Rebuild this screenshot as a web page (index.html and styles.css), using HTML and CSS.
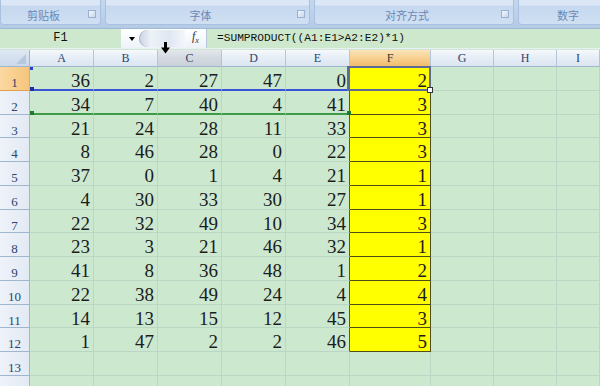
FILE: index.html
```html
<!DOCTYPE html>
<html>
<head>
<meta charset="utf-8">
<link rel="stylesheet" href="styles.css">
</head>
<body>
<div class="ribbon">
  <div class="group g1"><span class="glabel">剪贴板</span><span class="launch"></span></div>
  <div class="group g2"><span class="glabel">字体</span><span class="launch"></span></div>
  <div class="group g3"><span class="glabel">对齐方式</span><span class="launch"></span></div>
  <div class="group g4"><span class="glabel">数字</span></div>
</div>
<div class="fbar">
  <div class="namebox">F1</div>
  <div class="ctrl">
    <span class="drop"></span>
    <span class="grip"></span>
    <span class="fx"><i>f</i><sub>x</sub></span>
  </div>
  <div class="formula">=SUMPRODUCT((A1:E1&gt;A2:E2)*1)</div>
</div>
<svg class="cursor" width="9" height="12" viewBox="0 0 9 12"><rect x="3" y="0" width="3" height="6" fill="#000"/><path d="M0 5.5 H9 L4.5 11.5 Z" fill="#000"/></svg>
<div class="sheet">
  <div class="corner"></div><div class="ch">A</div><div class="ch">B</div><div class="ch hov">C</div><div class="ch">D</div><div class="ch">E</div><div class="ch sel">F</div><div class="ch">G</div><div class="ch">H</div><div class="ch">I</div>

  <div class="rh sel">1</div><div class="c r1 pin"><span class="mk b1"></span><span class="mk b2"></span>36</div><div class="c r1">2</div><div class="c r1">27</div><div class="c r1">47</div><div class="c r1 e">0</div><div class="c y act">2<span class="actbox"></span><span class="handle"></span></div><div class="c"></div><div class="c"></div><div class="c"></div>
  <div class="rh">2</div><div class="c r2 pin"><span class="mk g1m"></span>34</div><div class="c r2">7</div><div class="c r2">40</div><div class="c r2">4</div><div class="c r2 e pin">41<span class="mk g2m"></span></div><div class="c y">3</div><div class="c"></div><div class="c"></div><div class="c"></div>
  <div class="rh">3</div><div class="c">21</div><div class="c">24</div><div class="c">28</div><div class="c">11</div><div class="c e">33</div><div class="c y">3</div><div class="c"></div><div class="c"></div><div class="c"></div>
  <div class="rh">4</div><div class="c">8</div><div class="c">46</div><div class="c">28</div><div class="c">0</div><div class="c e">22</div><div class="c y">3</div><div class="c"></div><div class="c"></div><div class="c"></div>
  <div class="rh">5</div><div class="c">37</div><div class="c">0</div><div class="c">1</div><div class="c">4</div><div class="c e">21</div><div class="c y">1</div><div class="c"></div><div class="c"></div><div class="c"></div>
  <div class="rh">6</div><div class="c">4</div><div class="c">30</div><div class="c">33</div><div class="c">30</div><div class="c e">27</div><div class="c y">1</div><div class="c"></div><div class="c"></div><div class="c"></div>
  <div class="rh">7</div><div class="c">22</div><div class="c">32</div><div class="c">49</div><div class="c">10</div><div class="c e">34</div><div class="c y">3</div><div class="c"></div><div class="c"></div><div class="c"></div>
  <div class="rh">8</div><div class="c">23</div><div class="c">3</div><div class="c">21</div><div class="c">46</div><div class="c e">32</div><div class="c y">1</div><div class="c"></div><div class="c"></div><div class="c"></div>
  <div class="rh">9</div><div class="c">41</div><div class="c">8</div><div class="c">36</div><div class="c">48</div><div class="c e">1</div><div class="c y">2</div><div class="c"></div><div class="c"></div><div class="c"></div>
  <div class="rh">10</div><div class="c">22</div><div class="c">38</div><div class="c">49</div><div class="c">24</div><div class="c e">4</div><div class="c y">4</div><div class="c"></div><div class="c"></div><div class="c"></div>
  <div class="rh">11</div><div class="c">14</div><div class="c">13</div><div class="c">15</div><div class="c">12</div><div class="c e">45</div><div class="c y">3</div><div class="c"></div><div class="c"></div><div class="c"></div>
  <div class="rh">12</div><div class="c">1</div><div class="c">47</div><div class="c">2</div><div class="c">2</div><div class="c e">46</div><div class="c y">5</div><div class="c"></div><div class="c"></div><div class="c"></div>
  <div class="rh">13</div><div class="c"></div><div class="c"></div><div class="c"></div><div class="c"></div><div class="c"></div><div class="c"></div><div class="c"></div><div class="c"></div><div class="c"></div>
  <div class="rh"></div><div class="c"></div><div class="c"></div><div class="c"></div><div class="c"></div><div class="c"></div><div class="c"></div><div class="c"></div><div class="c"></div><div class="c"></div>
</div>
</body>
</html>
```
FILE: styles.css
```css
html, body {
  margin: 0;
  padding: 0;
}
body {
  width: 600px;
  height: 386px;
  overflow: hidden;
  position: relative;
  background: #cce8cf;
  font-family: "Liberation Serif", serif;
}

/* ribbon */
.ribbon {
  height: 28px;
  display: flex;
  gap: 4px;
  background: linear-gradient(#c4d7ee, #b4cbe6);
  overflow: hidden;
}
.group {
  flex: none;
  height: 25px;
  box-sizing: border-box;
  position: relative;
  display: flex;
  align-items: center;
  justify-content: center;
  padding: 5px 14px 0 0;
  border: 1px solid #a9c1df;
  border-top: none;
  border-radius: 0 0 4px 4px;
  background: linear-gradient(#dbe7f6 0, #dbe7f6 5px, #c6d8ef 6px, #d0e0f3 100%);
}
.g1 { width: 101px; }
.g2 { width: 205px; }
.g3 { width: 200px; }
.g4 { width: 114px; }
.glabel {
  font-family: "Noto Sans CJK SC", sans-serif;
  font-size: 11px;
  line-height: 14px;
  color: #6a88b6;
}
.launch {
  position: absolute;
  right: 4px;
  top: 10px;
  width: 6px;
  height: 6px;
  border: 1px solid #9ab1d2;
  background: linear-gradient(135deg, #f3f7fc, #c7d7ec);
}

/* formula bar */
.fbar {
  height: 19px;
  display: flex;
  background: #cde8cd;
  border-top: 1px solid #9fb8d4;
  border-bottom: 1px solid #e9eff6;
}
.namebox {
  width: 121px;
  flex: none;
  text-align: center;
  font-family: "Liberation Mono", monospace;
  font-size: 12px;
  line-height: 19px;
  color: #111;
}
.ctrl {
  width: 86px;
  flex: none;
  display: flex;
  align-items: center;
  background: linear-gradient(#ffffff, #eef3f9);
  border-right: 1px solid #b5c6da;
  box-sizing: border-box;
}
.drop {
  width: 0;
  height: 0;
  margin-left: 8px;
  border-left: 3px solid transparent;
  border-right: 3px solid transparent;
  border-top: 4px solid #000;
}
.grip {
  width: 46px;
  height: 17px;
  margin-left: 4px;
  border-radius: 9px 0 0 9px;
  background: linear-gradient(90deg, #c9d4e2 0, #eef2f8 12px, #dfe7f2 30px, #f4f7fb 100%);
  box-shadow: inset 1px 0 0 #aab8cb;
}
.fx {
  font-family: "Liberation Serif", serif;
  font-size: 12px;
  color: #333;
  margin-left: 7px;
  line-height: 12px;
}
.fx sub { font-size: 8px; font-style: italic; }
.formula {
  padding-left: 10px;
  font-family: "Liberation Mono", monospace;
  font-size: 11.2px;
  line-height: 19px;
  color: #111;
}

.cursor {
  position: absolute;
  left: 161px;
  top: 42px;
  z-index: 5;
}

/* sheet */
.sheet {
  margin-top: 1px;
  display: grid;
  grid-template-columns: 30px 64px 64px 64px 64px 64px 81px 63px 63px 1fr;
  grid-template-rows: 17px repeat(14, 23.75px);
}
.corner {
  background: linear-gradient(#dfe8f4, #cbd9ec);
  border-right: 1px solid #9eb6ce;
  border-bottom: 1px solid #9eb6ce;
  position: relative;
}
.corner::after {
  content: "";
  position: absolute;
  right: 3px;
  bottom: 2px;
  border-left: 10px solid transparent;
  border-bottom: 10px solid #b8c8dc;
}
.ch {
  text-align: center;
  font-size: 12px;
  line-height: 17px;
  color: #2b4470;
  background: linear-gradient(#f6f8fc, #e6edf6 50%, #dbe5f1);
  border-right: 1px solid #b3c5da;
  border-bottom: 1px solid #9eb6ce;
  box-sizing: border-box;
}
.ch.hov {
  background: linear-gradient(#e3e7ec, #d4d9e0 50%, #cbd1d9);
}
.ch.sel {
  background: linear-gradient(#fbe3b6, #f8d193 50%, #f2bd6c);
  border-bottom-color: #e0a04c;
  color: #3a3a3a;
}
.rh {
  text-align: center;
  font-size: 13px;
  line-height: 22px;
  padding-top: 5px;
  box-sizing: border-box;
  overflow: hidden;
  color: #2b4470;
  background: linear-gradient(90deg, #eef2f9, #e3eaf4);
  border-right: 1px solid #9eb6ce;
  border-bottom: 1px solid #9eb6ce;
}
.rh.sel {
  background: linear-gradient(90deg, #fbd9a2, #f6c57c);
  border-bottom-color: #e0a04c;
}
.c {
  box-sizing: border-box;
  text-align: right;
  padding: 2px 3px 0 0;
  font-size: 19px;
  line-height: 23px;
  color: #1c1c1c;
  overflow: hidden;
  border-right: 1px solid #bad6c4;
  border-bottom: 1px solid #bad6c4;
}
.c.pin { position: relative; overflow: visible; }
.c.e { border-right-color: #5a5a22; }
.c.y {
  background: #ffff00;
  border-right-color: #4d4d18;
  border-bottom-color: #4d4d18;
}
.c.r1 { border-bottom: 2px solid #3a54d8; }
.c.r2 { border-bottom: 2px solid #3f9a48; }
.c.act { position: relative; overflow: visible; }
.actbox {
  position: absolute;
  left: -3px;
  top: -1px;
  right: -1px;
  bottom: -1px;
  border: 2px solid #5d6c95;
  border-left-width: 3px;
  pointer-events: none;
}
.handle {
  position: absolute;
  right: -3px;
  bottom: -3px;
  width: 4px;
  height: 4px;
  background: #fff;
  border: 1px solid #333;
}
.mk {
  position: absolute;
  width: 3px;
  height: 3px;
}
.b1 { left: 0; top: 0; background: #2a3fd0; }
.b2 { left: 0; bottom: -2px; background: #1e2fa8; width: 4px; height: 4px; }
.g1m { left: 0; bottom: -2px; background: #1f7a2a; width: 4px; height: 4px; }
.g2m { right: -2px; bottom: -2px; background: #1f7a2a; width: 4px; height: 4px; }
```
